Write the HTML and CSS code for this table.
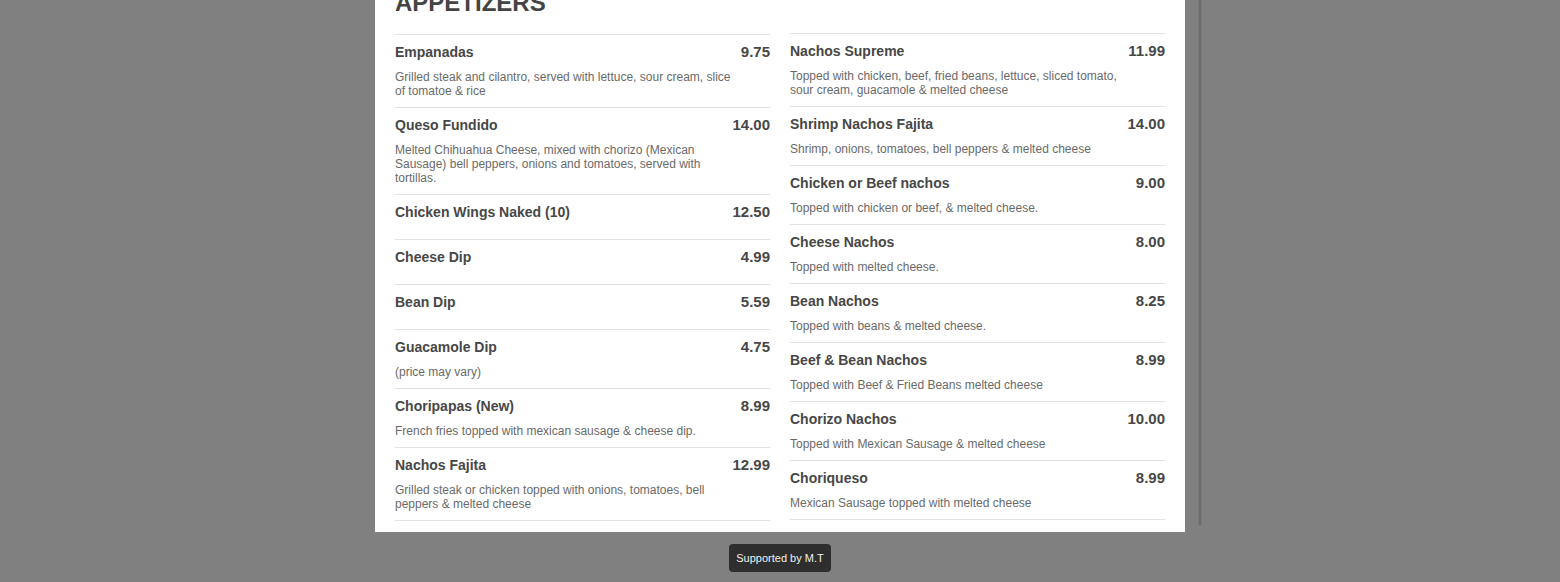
FILE: index.html
```html
<!DOCTYPE html>
<html>
<head>
<meta charset="utf-8">
<link rel="stylesheet" href="styles.css">
</head>
<body>
<div class="scroll-line"></div>
<div class="page">
  <div class="panel">
    <h2 class="heading">APPETIZERS</h2>
    <div class="columns">
      <div class="col col-left">
        <div class="item"><div class="head"><span class="name">Empanadas</span><span class="price">9.75</span></div><p class="desc">Grilled steak and cilantro, served with lettuce, sour cream, slice of tomatoe &amp; rice</p></div>
        <div class="item"><div class="head"><span class="name">Queso Fundido</span><span class="price">14.00</span></div><p class="desc">Melted Chihuahua Cheese, mixed with chorizo (Mexican Sausage) bell peppers, onions and tomatoes, served with tortillas.</p></div>
        <div class="item"><div class="head"><span class="name">Chicken Wings Naked (10)</span><span class="price">12.50</span></div><p class="desc"></p></div>
        <div class="item"><div class="head"><span class="name">Cheese Dip</span><span class="price">4.99</span></div><p class="desc"></p></div>
        <div class="item"><div class="head"><span class="name">Bean Dip</span><span class="price">5.59</span></div><p class="desc"></p></div>
        <div class="item"><div class="head"><span class="name">Guacamole Dip</span><span class="price">4.75</span></div><p class="desc">(price may vary)</p></div>
        <div class="item"><div class="head"><span class="name">Choripapas (New)</span><span class="price">8.99</span></div><p class="desc">French fries topped with mexican sausage &amp; cheese dip.</p></div>
        <div class="item"><div class="head"><span class="name">Nachos Fajita</span><span class="price">12.99</span></div><p class="desc">Grilled steak or chicken topped with onions, tomatoes, bell peppers &amp; melted cheese</p></div>
      </div>
      <div class="col">
        <div class="item"><div class="head"><span class="name">Nachos Supreme</span><span class="price">11.99</span></div><p class="desc">Topped with chicken, beef, fried beans, lettuce, sliced tomato, sour cream, guacamole &amp; melted cheese</p></div>
        <div class="item"><div class="head"><span class="name">Shrimp Nachos Fajita</span><span class="price">14.00</span></div><p class="desc">Shrimp, onions, tomatoes, bell peppers &amp; melted cheese</p></div>
        <div class="item"><div class="head"><span class="name">Chicken or Beef nachos</span><span class="price">9.00</span></div><p class="desc">Topped with chicken or beef, &amp; melted cheese.</p></div>
        <div class="item"><div class="head"><span class="name">Cheese Nachos</span><span class="price">8.00</span></div><p class="desc">Topped with melted cheese.</p></div>
        <div class="item"><div class="head"><span class="name">Bean Nachos</span><span class="price">8.25</span></div><p class="desc">Topped with beans &amp; melted cheese.</p></div>
        <div class="item"><div class="head"><span class="name">Beef &amp; Bean Nachos</span><span class="price">8.99</span></div><p class="desc">Topped with Beef &amp; Fried Beans melted cheese</p></div>
        <div class="item"><div class="head"><span class="name">Chorizo Nachos</span><span class="price">10.00</span></div><p class="desc">Topped with Mexican Sausage &amp; melted cheese</p></div>
        <div class="item"><div class="head"><span class="name">Choriqueso</span><span class="price">8.99</span></div><p class="desc">Mexican Sausage topped with melted cheese</p></div>
      </div>
    </div>
  </div>
  <div class="badge">Supported by M.T</div>
</div>
</body>
</html>
```

FILE: styles.css
```css
html, body {
  margin: 0;
  padding: 0;
  height: 100%;
  overflow: hidden;
}
body {
  background: #808080;
  font-family: "Liberation Sans", Arial, sans-serif;
}
.scroll-line {
  position: fixed;
  left: 1199px;
  top: 0;
  width: 2px;
  height: 525px;
  background: #6c6c6c;
  box-shadow: 0 0 0 1px #7a7a7a;
}
.page {
  display: flex;
  flex-direction: column;
  align-items: center;
}
.panel {
  width: 810px;
  box-sizing: border-box;
  background: #fff;
  padding: 0 20px 11px;
}
.heading {
  margin: -11px 0 16px;
  font-size: 24px;
  line-height: 28px;
  font-weight: bold;
  color: #444;
}
.columns {
  display: grid;
  grid-template-columns: 375px 375px;
  column-gap: 20px;
  align-items: start;
}
.col {
  border-top: 1px solid #e2e2e2;
}
.col-left {
  margin-top: 1px;
}
.item {
  padding: 10px 0 9px;
  border-bottom: 1px solid #e2e2e2;
}
.head {
  display: flex;
  justify-content: space-between;
  align-items: baseline;
  height: 16px;
  line-height: 16px;
}
.name {
  font-size: 14px;
  font-weight: bold;
  color: #474747;
  position: relative;
  top: -1px;
}
.price {
  font-size: 15px;
  font-weight: bold;
  color: #474747;
  position: relative;
  top: -1px;
}
.desc {
  margin: 9px 0 0;
  padding-right: 34px;
  font-size: 12px;
  line-height: 14px;
  color: #6a6a6a;
}
.badge {
  margin-top: 12px;
  width: 102px;
  height: 28px;
  box-sizing: border-box;
  background: #2e2e2e;
  color: #f0f0f0;
  border-radius: 4px;
  font-size: 11px;
  line-height: 28px;
  text-align: center;
}
```
